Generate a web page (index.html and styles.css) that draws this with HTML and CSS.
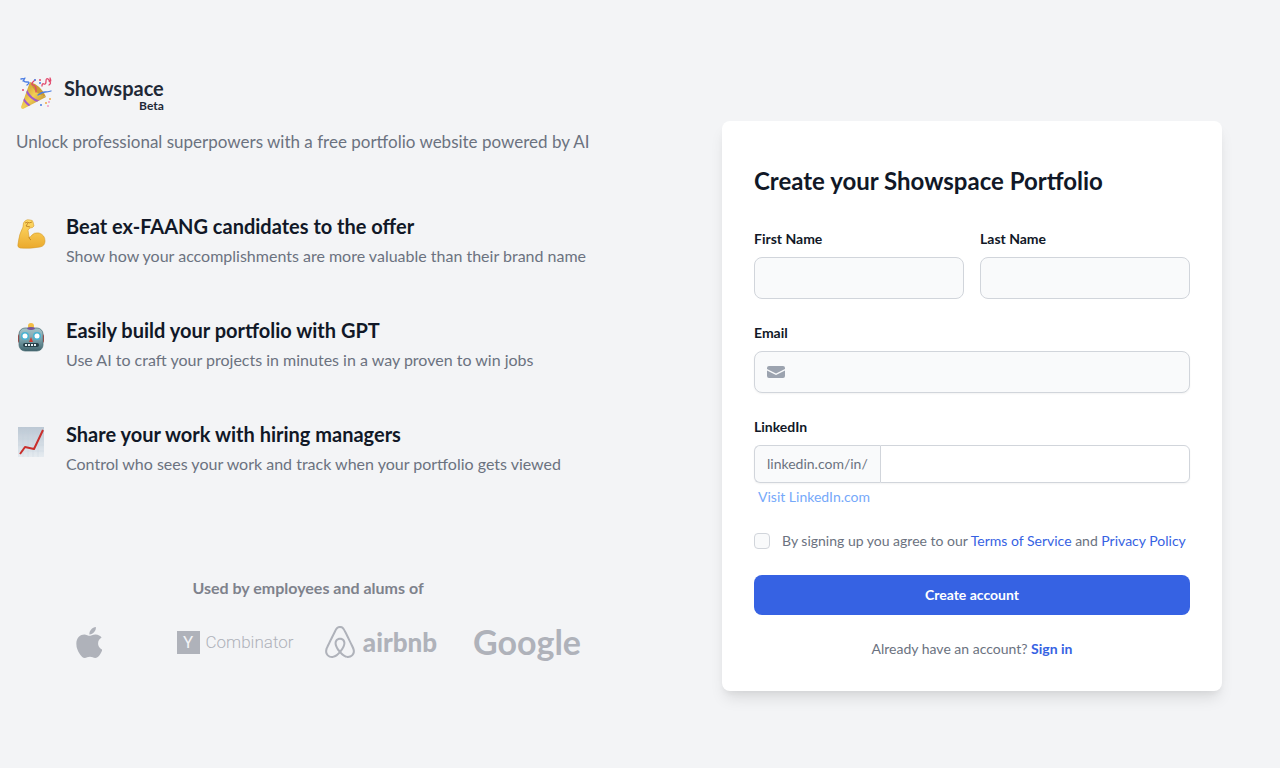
FILE: index.html
```html
<!DOCTYPE html>
<html lang="en">
<head>
	<meta charset="UTF-8">
	<meta name="viewport" content="width=device-width, initial-scale=1">
	<title>Showspace - Sign up</title>
	<link rel="stylesheet" href="styles.css">
</head>
<body>
	<main class="container">
		<section class="intro">
			<a class="brand" href="#">
				<svg class="brand-icon" viewBox="0 0 36 36" aria-hidden="true">
					<defs>
						<linearGradient id="cone" x1="0" y1="0" x2="1" y2="1">
							<stop offset="0" stop-color="#b98a20" />
							<stop offset=".5" stop-color="#f3ce55" />
							<stop offset="1" stop-color="#a87722" />
						</linearGradient>
						<clipPath id="cone-clip"><path d="M12 6L3 31q0 2 2 2L28 21Q17 17 12 6z" /></clipPath>
					</defs>
					<path fill="url(#cone)" d="M12 6L3 31q0 2 2 2L28 21Q17 17 12 6z" />
					<g clip-path="url(#cone-clip)" fill="none" stroke="#a05acb" stroke-width="2">
						<path d="M8 14q4 9 14 12M5 22q3 6 9 9" />
					</g>
					<path fill="#c99a33" d="M12 6Q23 9 28 21Q16 18 12 6z" />
					<g fill="none" stroke-width="1.300" stroke-linecap="round">
						<path stroke="#e2476b" d="M18 13q0-3-3-4t2-5M24 10q0-3 2-2t2-3 3-1 1-2M31 9q3-2 0-4M18 13v3" />
						<path stroke="#487be3" d="M20 19q4-3 7-3t6-1M3 3q4-1 3 1t3 2 0 3M7 2L5 5" />
					</g>
					<g fill="#487be3"><circle cx="17" cy="4" r="1" /><circle cx="22" cy="7" r="1" /><circle cx="23" cy="29" r="1" /></g>
					<g fill="#e2476b"><circle cx="5" cy="14" r="1" /><circle cx="22" cy="4" r="1" /></g>
					<g fill="#f0a844"><circle cx="32" cy="23" r="1" /><circle cx="28" cy="27" r="1" /></g>
					<g fill="#f09bc5"><circle cx="31" cy="26" r="1" /><circle cx="30" cy="30" r="1" /></g>
				</svg>
				<span class="brand-text">
					<span class="brand-name">Showspace</span>
					<span class="brand-tag">Beta</span>
				</span>
			</a>
			<p class="tagline">Unlock professional superpowers with a free portfolio website powered by AI</p>

			<ul class="features">
				<li>
					<svg class="feature-icon" viewBox="0 0 30 32" aria-hidden="true">
						<defs>
							<linearGradient id="skin" x1="0" y1="0" x2="0" y2="1">
								<stop offset="0" stop-color="#ffdc69" />
								<stop offset="1" stop-color="#eba92c" />
							</linearGradient>
						</defs>
						<path fill="url(#skin)" stroke="#d49a2c" stroke-width=".6" d="M9 3q2-2 5-1 3 0 3 2l1 4q-1 2-4 2l-2 2 1 7q1 1 2-1 3-4 8-3 6 2 6 8 0 5-5 6-10 2-20 1-3-1-2-4Q3 16 7 9q0-5 2-6z" />
						<path fill="none" stroke="#b97918" stroke-width=".8" d="M9 5l3-1 1 1 3-1M12 5l-2 3 4 1M13 19q0 2 2 3" />
					</svg>
					<div>
						<h3>Beat ex-FAANG candidates to the offer</h3>
						<p>Show how your accomplishments are more valuable than their brand name</p>
					</div>
				</li>
				<li>
					<svg class="feature-icon" viewBox="0 0 30 32" aria-hidden="true">
						<defs>
							<linearGradient id="metal" x1="0" y1="0" x2="0" y2="1">
								<stop offset="0" stop-color="#a6c4ca" />
								<stop offset=".5" stop-color="#7aa1aa" />
								<stop offset="1" stop-color="#42646d" />
							</linearGradient>
						</defs>
						<rect x="2" y="12" width="4" height="9" rx="2" fill="#bb3f38" />
						<rect x="24" y="12" width="4" height="9" rx="2" fill="#bb3f38" />
						<circle cx="15" cy="4" r="3" fill="#f2bd45" />
						<rect x="3" y="6" width="24" height="23" rx="6" fill="url(#metal)" stroke="#486b73" stroke-width=".7" />
						<path fill="#77539a" d="M11 7q0-2 4-2t4 2q-4 2-8 0z" />
						<circle cx="9" cy="14" r="4" fill="#49b3d3" />
						<circle cx="21" cy="14" r="4" fill="#49b3d3" />
						<circle cx="9" cy="14" r="2.500" fill="#fff" />
						<circle cx="21" cy="14" r="2.500" fill="#fff" />
						<path fill="#d13c32" d="M15 15l2 5h-4z" />
						<rect x="7" y="21" width="16" height="4" rx="2" fill="#263f48" />
						<path stroke="#e5eff2" stroke-width="2" stroke-dasharray="2 1" d="M9 23h12" />
					</svg>
					<div>
						<h3>Easily build your portfolio with GPT</h3>
						<p>Use AI to craft your projects in minutes in a way proven to win jobs</p>
					</div>
				</li>
				<li>
					<svg class="feature-icon" viewBox="0 0 30 32" aria-hidden="true">
						<defs>
							<linearGradient id="paper" x1="0" y1="0" x2="0" y2="1">
								<stop offset="0" stop-color="#bcc8d4" />
								<stop offset="1" stop-color="#e5ebf0" />
							</linearGradient>
						</defs>
						<rect x="2" y="1" width="26" height="30" fill="url(#paper)" />
						<path stroke="#c3ced8" stroke-width=".3" d="M7 1v30M12 1v30M17 1v30M22 1v30M2 7h26M2 13h26M2 19h26M2 25h26" />
						<path fill="none" stroke="#c92f2c" stroke-width="2" stroke-linejoin="round" d="M4 28l5-7 9 2 9-19" />
					</svg>
					<div>
						<h3>Share your work with hiring managers</h3>
						<p>Control who sees your work and track when your portfolio gets viewed</p>
					</div>
				</li>
			</ul>

			<h4 class="companies-title">Used by employees and alums of</h4>
			<div class="companies">
				<div class="company">
					<svg class="apple" viewBox="4 32 366 448" role="img" aria-label="Apple">
						<path d="M318.7 268.7c-.2-36.7 16.4-64.4 50-84.8-18.8-26.9-47.2-41.7-84.7-44.6-35.5-2.8-74.3 20.7-88.5 20.7-15 0-49.4-19.7-76.4-19.7C63.3 141.2 4 184.8 4 273.5q0 39.3 14.4 81.2c12.8 36.7 59 126.7 107.2 125.2 25.2-.6 43-17.9 75.8-17.9 31.8 0 48.3 17.9 76.4 17.9 48.6-.7 90.4-82.5 102.6-119.3-65.2-30.7-61.7-90-61.7-91.9zm-56.6-164.2c27.3-32.4 24.8-61.9 24-72.5-24.1 1.4-52 16.4-67.9 34.9-17.5 19.8-27.8 44.3-25.6 71.9 26.1 2 49.9-11.4 69.5-34.3z" />
					</svg>
				</div>
				<div class="company ycombinator">
					<span class="yc-box">Y</span>
					<span>Combinator</span>
				</div>
				<div class="company airbnb">
					<svg class="belo" viewBox="16 32 416 448" aria-hidden="true">
						<path d="M224 373.12c-25.24-31.67-40.08-59.43-45-83.18-22.55-88 112.61-88 90.06 0-5.45 24.25-20.29 52-45 83.18zm138.15 73.23c-42.06 18.31-83.67-10.88-119.3-50.47 103.9-130.07 46.11-200-18.85-200-54.92 0-85.16 46.51-73.28 100.5 6.93 29.19 25.23 62.39 54.43 99.5-32.53 36.05-60.55 52.69-85.15 54.92-50 7.43-89.11-41.06-71.3-91.09 15.1-39.16 111.72-231.18 115.87-241.56 15.75-30.07 25.56-57.4 59.38-57.4 32.34 0 43.4 25.94 60.37 59.87 36 70.62 89.35 177.48 114.84 239.09 13.17 33.07-1.37 71.29-37.01 86.64zm47-136.12C280.27 35.93 273.13 32 224 32c-45.52 0-64.87 31.67-84.66 72.79C33.18 317.1 22.89 347.19 22 349.81-3.22 419.14 48.74 480 111.63 480c21.71 0 60.61-6.06 112.37-62.4 58.68 63.78 101.26 62.4 112.37 62.4 62.89.05 114.85-60.86 89.61-130.19.02-3.89-16.82-38.9-16.82-39.58z" />
					</svg>
					<span>airbnb</span>
				</div>
				<div class="company google">Google</div>
			</div>
		</section>

		<section class="card">
			<h1>Create your Showspace Portfolio</h1>
			<form action="#" method="post">
				<div class="names">
					<div class="field">
						<label for="first-name">First Name</label>
						<input type="text" name="first-name" id="first-name">
					</div>
					<div class="field">
						<label for="last-name">Last Name</label>
						<input type="text" name="last-name" id="last-name">
					</div>
				</div>
				<div class="field">
					<label for="email">Email</label>
					<div class="email-box">
						<svg class="mail-icon" viewBox="0 0 18 12" aria-hidden="true">
							<path d="M0 2a2 2 0 012-2h14a2 2 0 012 2v1L9 7.500 0 3z" />
							<path d="M0 4.500l9 4.500 9-4.500V10a2 2 0 01-2 2H2a2 2 0 01-2-2z" />
						</svg>
						<input type="email" name="email" id="email">
					</div>
				</div>
				<div class="field linkedin">
					<label for="linkedin">LinkedIn</label>
					<div class="input-group">
						<span class="prefix">linkedin.com/in/</span>
						<input type="text" name="linkedin" id="linkedin">
					</div>
					<a class="visit" href="#">Visit LinkedIn.com</a>
				</div>
				<div class="terms">
					<input type="checkbox" name="terms" id="terms">
					<label for="terms">By signing up you agree to our <a href="#">Terms of Service</a> and <a href="#">Privacy Policy</a></label>
				</div>
				<button type="submit">Create account</button>
				<p class="signin">Already have an account? <a href="#">Sign in</a></p>
			</form>
		</section>
	</main>
</body>
</html>
```
FILE: styles.css
```css
* {
	box-sizing: border-box;
}
body {
	margin: 0;
	min-height: 100vh;
	background: #f3f4f6;
	color: #111827;
	font-family: Lato, "Liberation Sans", sans-serif;
	font-size: 14px;
	line-height: 20px;
}
h1, h3, h4, p, ul {
	margin: 0;
	padding: 0;
}
a {
	color: #3662e3;
	text-decoration: none;
}
.container {
	display: grid;
	grid-template-columns: 1fr 1fr;
	gap: 80px;
	align-items: start;
	max-width: 1280px;
	margin: 0 auto;
	padding: 76px 16px;
}

/* left column */
.brand {
	display: flex;
	align-items: center;
	gap: 10px;
	color: #1f2937;
	padding-left: 2px;
}
.brand-icon {
	width: 36px;
	height: 36px;
}
.brand-text {
	display: flex;
	flex-direction: column;
	font-weight: 700;
}
.brand-name {
	font-size: 20px;
	line-height: 24px;
}
.brand-tag {
	font-size: 12px;
	line-height: 12px;
	text-align: right;
}
.tagline {
	margin-top: 16px;
	font-size: 17px;
	line-height: 28px;
	color: #6b7280;
}
.features {
	display: grid;
	gap: 48px;
	margin-top: 56px;
	list-style: none;
}
.features li {
	display: flex;
	gap: 20px;
}
.feature-icon {
	flex: none;
	width: 30px;
	height: 32px;
	margin-top: 6px;
}
.features h3 {
	font-size: 20px;
	line-height: 28px;
}
.features p {
	margin-top: 4px;
	font-size: 16px;
	line-height: 24px;
	color: #6b7280;
}
.companies-title {
	margin-top: 100px;
	font-size: 16px;
	line-height: 24px;
	text-align: center;
	color: #7e828c;
}
.companies {
	display: grid;
	grid-template-columns: repeat(4, 1fr);
	align-items: center;
	margin-top: 20px;
	color: #afb2ba;
}
.company {
	display: flex;
	align-items: center;
	justify-content: center;
	height: 44px;
}
.company svg {
	fill: currentColor;
}
.apple {
	width: 26px;
	height: 31px;
}
.ycombinator {
	gap: 6px;
	font: 300 17px Roboto, sans-serif;
}
.yc-box {
	width: 23px;
	height: 23px;
	background: #afb2ba;
	color: #f3f4f6;
	font-weight: 400;
	line-height: 23px;
	text-align: center;
}
.airbnb {
	gap: 8px;
	font-size: 26px;
	font-weight: 900;
}
.belo {
	width: 30px;
	height: 32px;
}
.google {
	font-size: 34px;
	font-weight: 700;
}

/* sign up card */
.card {
	justify-self: center;
	width: 100%;
	max-width: 500px;
	margin-top: 45px;
	padding: 44px 32px 32px;
	background: #fff;
	border-radius: 8px;
	box-shadow: 0 10px 15px -3px rgba(0,0,0,.1), 0 4px 6px -2px rgba(0,0,0,.05);
}
.card h1 {
	font-size: 24px;
	line-height: 32px;
}
form {
	display: flex;
	flex-direction: column;
	gap: 24px;
	margin-top: 32px;
}
.names {
	display: grid;
	grid-template-columns: 1fr 1fr;
	gap: 16px;
}
.field label {
	display: block;
	margin-bottom: 8px;
	font-weight: 700;
}
.field input {
	display: block;
	width: 100%;
	height: 42px;
	padding: 10px;
	background: #f9fafb;
	border: 1px solid #d1d5db;
	border-radius: 8px;
	font: inherit;
}
.email-box {
	position: relative;
}
.email-box input {
	padding-left: 40px;
	box-shadow: 0 1px 2px rgba(0,0,0,.05);
}
.mail-icon {
	position: absolute;
	top: 15px;
	left: 13px;
	width: 18px;
	height: 12px;
	fill: #9ca3af;
}
.input-group {
	display: flex;
	border-radius: 6px;
	box-shadow: 0 1px 2px rgba(0,0,0,.05);
}
.prefix {
	padding: 8px 12px;
	background: #f9fafb;
	border: 1px solid #d1d5db;
	border-right: 0;
	border-radius: 6px 0 0 6px;
	color: #6b7280;
}
.input-group input {
	flex: 1;
	width: auto;
	min-width: 0;
	height: 38px;
	background: #fff;
	border-radius: 0 6px 6px 0;
}
.visit {
	display: inline-block;
	margin: 4px 4px 0;
	color: #76a9fa;
}
.terms {
	display: flex;
	align-items: center;
	gap: 12px;
	color: #6b7280;
}
.terms input {
	appearance: none;
	flex: none;
	width: 16px;
	height: 16px;
	margin: 0;
	background: #f9fafb;
	border: 1px solid #d1d5db;
	border-radius: 4px;
}
.terms input:checked {
	background: #3662e3;
}
button {
	height: 40px;
	border: 0;
	border-radius: 8px;
	background: #3662e3;
	color: #fff;
	font: inherit;
	font-weight: 700;
	cursor: pointer;
}
.signin {
	color: #6b7280;
	text-align: center;
}
.signin a {
	font-weight: 700;
}

@media (max-width: 900px) {
	.container {
		grid-template-columns: 1fr;
	}
	.card {
		margin-top: 0;
	}
}
```
